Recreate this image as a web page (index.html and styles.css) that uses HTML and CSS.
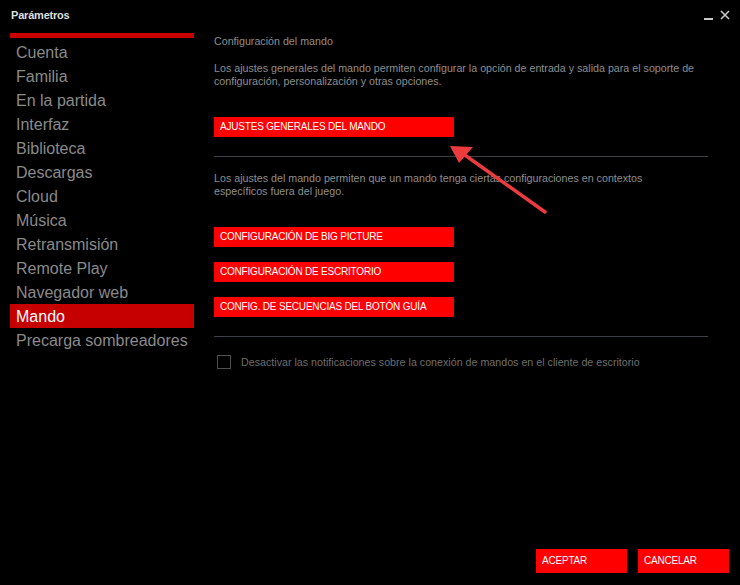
FILE: index.html
```html
<!DOCTYPE html>
<html lang="es">
<head>
<meta charset="utf-8">
<title>Parámetros</title>
<link rel="stylesheet" href="styles.css">
</head>
<body>
<div class="window">
  <header class="titlebar">
    <span class="title">Parámetros</span>
    <div class="controls">
      <span class="min"></span>
      <svg class="close" width="10" height="10" viewBox="0 0 10 10"><path d="M1 1L9 9M9 1L1 9" stroke="#c8c8c8" stroke-width="1.6"/></svg>
    </div>
  </header>
  <div class="main">
    <nav class="sidebar">
      <div class="sidebar-bar"></div>
      <a class="nav-item">Cuenta</a>
      <a class="nav-item">Familia</a>
      <a class="nav-item">En la partida</a>
      <a class="nav-item">Interfaz</a>
      <a class="nav-item">Biblioteca</a>
      <a class="nav-item">Descargas</a>
      <a class="nav-item">Cloud</a>
      <a class="nav-item">Música</a>
      <a class="nav-item">Retransmisión</a>
      <a class="nav-item">Remote Play</a>
      <a class="nav-item">Navegador web</a>
      <a class="nav-item active">Mando</a>
      <a class="nav-item">Precarga sombreadores</a>
    </nav>
    <section class="content">
      <h2 class="heading">Configuración del mando</h2>
      <p class="desc first">Los ajustes generales del mando permiten configurar la opción de entrada y salida para el soporte de configuración, personalización y otras opciones.</p>
      <button class="btn">AJUSTES GENERALES DEL MANDO</button>
      <hr class="divider">
      <p class="desc second">Los ajustes del mando permiten que un mando tenga ciertas configuraciones en contextos específicos fuera del juego.</p>
      <div class="btn-group">
        <button class="btn">CONFIGURACIÓN DE BIG PICTURE</button>
        <button class="btn">CONFIGURACIÓN DE ESCRITORIO</button>
        <button class="btn">CONFIG. DE SECUENCIAS DEL BOTÓN GUÍA</button>
      </div>
      <hr class="divider second-div">
      <label class="check-row">
        <span class="checkbox"></span>
        <span class="check-label">Desactivar las notificaciones sobre la conexión de mandos en el cliente de escritorio</span>
      </label>
    </section>
  </div>
  <footer class="footer">
    <button class="btn footer-btn">ACEPTAR</button>
    <button class="btn footer-btn">CANCELAR</button>
  </footer>
  <svg class="arrow" width="740" height="585" viewBox="0 0 740 585">
    <line x1="545" y1="212" x2="462" y2="153" stroke="#ec3b3f" stroke-width="3.5" stroke-linecap="round"/>
    <path d="M450 146 L473 147 L459 163 Z" fill="#ec3b3f"/>
  </svg>
</div>
</body>
</html>
```
FILE: styles.css
```css
* { box-sizing: border-box; }
html, body {
  margin: 0;
  padding: 0;
  background: #000;
}
body {
  font-family: "Liberation Sans", Arial, sans-serif;
  width: 740px;
  height: 585px;
  overflow: hidden;
}
.window {
  position: relative;
  width: 740px;
  height: 585px;
  display: flex;
  flex-direction: column;
  background: #000;
}
.titlebar {
  height: 33px;
  display: flex;
  align-items: flex-start;
  justify-content: space-between;
  padding: 9px 10px 0 11px;
}
.title {
  font-size: 11px;
  font-weight: bold;
  color: #dcdedf;
  letter-spacing: -0.2px;
}
.controls {
  display: flex;
  align-items: flex-start;
  gap: 7px;
  padding-top: 1px;
}
.min {
  display: block;
  width: 9px;
  height: 2px;
  background: #c8c8c8;
  margin-top: 8px;
}
.main {
  display: flex;
  padding-left: 10px;
}
.sidebar {
  width: 184px;
  display: flex;
  flex-direction: column;
}
.sidebar-bar {
  height: 5px;
  background: #c80000;
  margin-bottom: 2px;
}
.nav-item {
  display: block;
  height: 24px;
  line-height: 25px;
  padding-left: 6px;
  font-size: 16px;
  color: #8a8a8a;
  white-space: nowrap;
}
.nav-item.active {
  background: #c60000;
  color: #fff;
}
.content {
  width: 494px;
  margin-left: 20px;
  display: flex;
  flex-direction: column;
  align-items: flex-start;
}
.heading {
  margin: 2px 0 0;
  font-size: 10.7px;
  font-weight: normal;
  color: #8e8e8e;
  line-height: 13px;
}
.desc {
  margin: 0;
  font-size: 10.7px;
  line-height: 13px;
  color: #8e8e8e;
}
.desc.first { margin-top: 14px; }
.desc.second { margin-top: 15px; max-width: 440px; }
.btn {
  display: block;
  width: 240px;
  height: 20px;
  border: none;
  background: #ff0000;
  color: #fff;
  font-family: "Liberation Sans", Arial, sans-serif;
  font-size: 10px;
  letter-spacing: -0.2px;
  white-space: nowrap;
  text-align: left;
  padding: 0 6px;
  margin: 0;
  line-height: 20px;
}
.content > .btn { margin-top: 29px; }
.divider {
  align-self: stretch;
  border: none;
  height: 1px;
  background: #3c4049;
  margin: 19px 0 0;
}
.btn-group {
  margin-top: 29px;
  display: flex;
  flex-direction: column;
  gap: 15px;
}
.second-div { margin-top: 19px; }
.check-row {
  margin-top: 18px;
  display: flex;
  align-items: center;
  padding-left: 3px;
}
.checkbox {
  width: 14px;
  height: 14px;
  border: 1px solid #4f4f4f;
  display: block;
}
.check-label {
  margin-left: 10px;
  font-size: 10.7px;
  color: #6e6e6e;
}
.footer {
  margin-top: auto;
  display: flex;
  justify-content: flex-end;
  gap: 11px;
  padding: 0 11px 12px 0;
}
.footer-btn {
  width: 91px;
  height: 24px;
  line-height: 24px;
}
.arrow {
  position: absolute;
  left: 0;
  top: 0;
  pointer-events: none;
}
```
